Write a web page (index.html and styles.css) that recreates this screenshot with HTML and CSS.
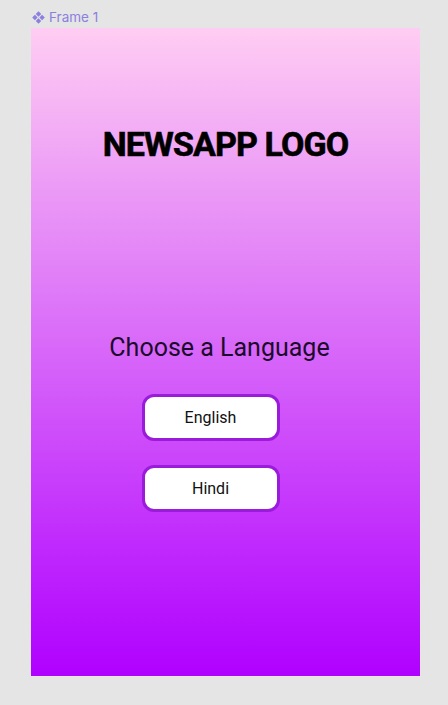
FILE: index.html
```html
<!DOCTYPE html>
<html>
<head>
<meta charset="utf-8">
<link rel="stylesheet" href="styles.css">
</head>
<body>
<div class="label">
  <svg class="label-icon" width="13" height="13" viewBox="0 0 12 12"><path d="M6 0.2L8.5 2.7L6 5.2L3.5 2.7Z M2.7 3.5L5.2 6L2.7 8.5L0.2 6Z M9.3 3.5L11.8 6L9.3 8.5L6.8 6Z M6 6.8L8.5 9.3L6 11.8L3.5 9.3Z" fill="#8b7fe0"/></svg>
  <span>Frame 1</span>
</div>
<div class="frame">
  <h1 class="logo">NEWSAPP LOGO</h1>
  <h2 class="choose">Choose a Language</h2>
  <div class="buttons">
    <button class="lang">English</button>
    <button class="lang">Hindi</button>
  </div>
</div>
</body>
</html>
```
FILE: styles.css
```css
html, body {
  margin: 0;
  padding: 0;
  background: #e5e5e5;
  width: 448px;
  height: 705px;
  overflow: hidden;
}
.label {
  height: 28px;
  display: flex;
  align-items: center;
  gap: 4px;
  padding-left: 32px;
  padding-top: 6px;
  box-sizing: border-box;
  font-family: Inter, "Noto Sans", sans-serif;
  font-size: 13.5px;
  color: #8b7fe0;
}
.frame {
  margin-left: 31px;
  width: 389px;
  height: 648px;
  background: linear-gradient(180deg, #ffcdf3 0%, #b000ff 100%);
  display: flex;
  flex-direction: column;
  align-items: center;
  font-family: Roboto, "Liberation Sans", sans-serif;
}
.logo {
  margin: 96px 0 0;
  font-size: 34px;
  line-height: 40px;
  font-weight: 700;
  letter-spacing: -0.9px;
  color: #000;
  -webkit-text-stroke: 0.6px #000;
}
.choose {
  margin: 169px 12px 0 0;
  font-size: 25px;
  line-height: 30px;
  font-weight: 400;
  color: #1c0b2c;
}
.buttons {
  margin: 31px 30px 0 0;
  display: flex;
  flex-direction: column;
  gap: 24px;
}
.lang {
  width: 138px;
  height: 47px;
  background: #fff;
  border: 3px solid #9a1bd9;
  border-radius: 12px;
  font-family: Roboto, "Liberation Sans", sans-serif;
  font-size: 16px;
  color: #111;
  padding: 0;
}
```
